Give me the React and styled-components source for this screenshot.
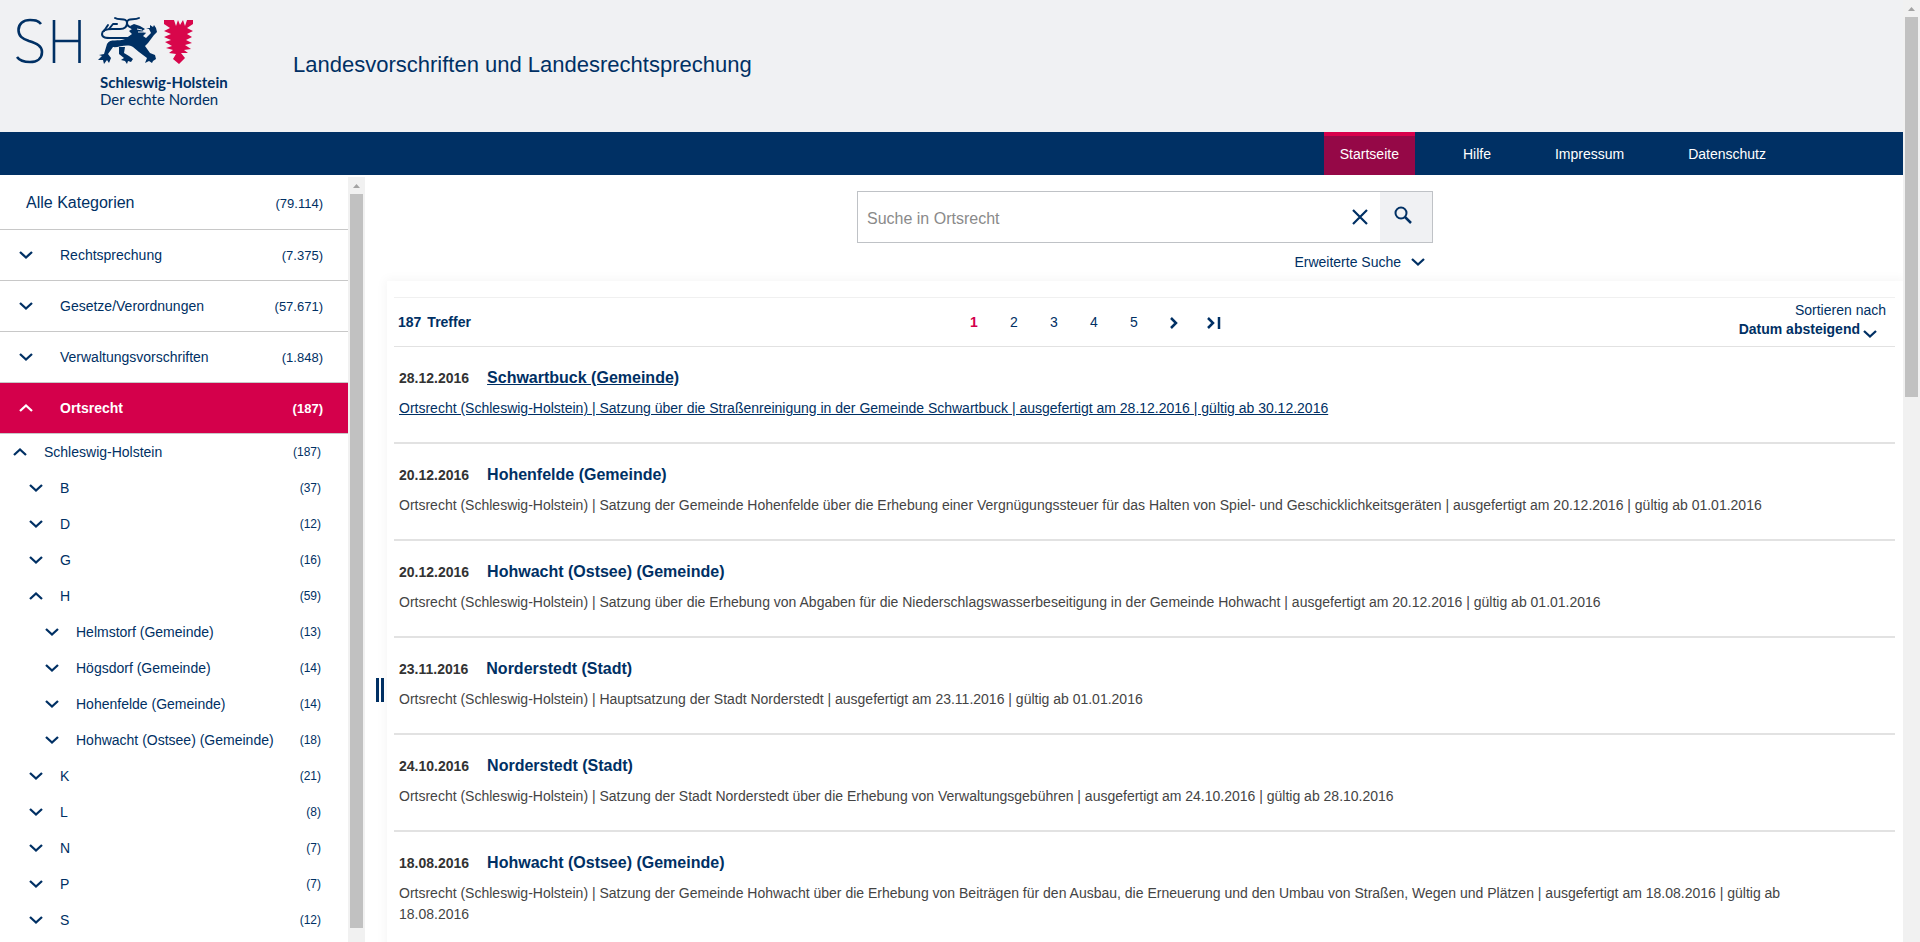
import React from 'react'
import styled, { createGlobalStyle, css } from 'styled-components'

const navItems = ['Startseite', 'Hilfe', 'Impressum', 'Datenschutz']

const categories = [
  { label: 'Rechtsprechung', count: '7.375' },
  { label: 'Gesetze/Verordnungen', count: '57.671' },
  { label: 'Verwaltungsvorschriften', count: '1.848' },
  { label: 'Ortsrecht', count: '187', active: true },
]

const tree = [
  { label: 'Schleswig-Holstein', count: 187, level: 0, open: true },
  { label: 'B', count: 37, level: 1 },
  { label: 'D', count: 12, level: 1 },
  { label: 'G', count: 16, level: 1 },
  { label: 'H', count: 59, level: 1, open: true },
  { label: 'Helmstorf (Gemeinde)', count: 13, level: 2 },
  { label: 'Högsdorf (Gemeinde)', count: 14, level: 2 },
  { label: 'Hohenfelde (Gemeinde)', count: 14, level: 2 },
  { label: 'Hohwacht (Ostsee) (Gemeinde)', count: 18, level: 2 },
  { label: 'K', count: 21, level: 1 },
  { label: 'L', count: 8, level: 1 },
  { label: 'N', count: 7, level: 1 },
  { label: 'P', count: 7, level: 1 },
  { label: 'S', count: 12, level: 1 },
]

const results = [
  {
    date: '28.12.2016',
    title: 'Schwartbuck (Gemeinde)',
    text: 'Ortsrecht (Schleswig-Holstein) | Satzung über die Straßenreinigung in der Gemeinde Schwartbuck | ausgefertigt am 28.12.2016 | gültig ab 30.12.2016',
    active: true,
  },
  {
    date: '20.12.2016',
    title: 'Hohenfelde (Gemeinde)',
    text: 'Ortsrecht (Schleswig-Holstein) | Satzung der Gemeinde Hohenfelde über die Erhebung einer Vergnügungssteuer für das Halten von Spiel- und Geschicklichkeitsgeräten | ausgefertigt am 20.12.2016 | gültig ab 01.01.2016',
  },
  {
    date: '20.12.2016',
    title: 'Hohwacht (Ostsee) (Gemeinde)',
    text: 'Ortsrecht (Schleswig-Holstein) | Satzung über die Erhebung von Abgaben für die Niederschlagswasserbeseitigung in der Gemeinde Hohwacht | ausgefertigt am 20.12.2016 | gültig ab 01.01.2016',
  },
  {
    date: '23.11.2016',
    title: 'Norderstedt (Stadt)',
    text: 'Ortsrecht (Schleswig-Holstein) | Hauptsatzung der Stadt Norderstedt | ausgefertigt am 23.11.2016 | gültig ab 01.01.2016',
  },
  {
    date: '24.10.2016',
    title: 'Norderstedt (Stadt)',
    text: 'Ortsrecht (Schleswig-Holstein) | Satzung der Stadt Norderstedt über die Erhebung von Verwaltungsgebühren | ausgefertigt am 24.10.2016 | gültig ab 28.10.2016',
  },
  {
    date: '18.08.2016',
    title: 'Hohwacht (Ostsee) (Gemeinde)',
    text: 'Ortsrecht (Schleswig-Holstein) | Satzung der Gemeinde Hohwacht über die Erhebung von Beiträgen für den Ausbau, die Erneuerung und den Umbau von Straßen, Wegen und Plätzen | ausgefertigt am 18.08.2016 | gültig ab 18.08.2016',
  },
]

const Chevron = ({ up }) => (
  <ChevronSvg width="14" height="10" viewBox="0 0 14 10" $up={up} aria-hidden="true">
    <path d="M1 2 L7 7.500 L13 2" />
  </ChevronSvg>
)

const Logo = () => (
  <svg width="250" height="120" viewBox="0 0 250 120" role="img" aria-label="Schleswig-Holstein">
    <g fill="none" stroke="#003064" strokeWidth="2.6">
      <path d="M41 24 C38 20 34 20 30 20 C23 20 18.500 24 18.500 30 C18.500 36 22 38.500 29 41 C37 43.500 42 46 42 52 C42 58.500 37 62 30 62 C24 62 19.500 60.500 17 57" />
      <path d="M54 20 V63 M79.500 20 V63 M54 41 H79.500" />
    </g>
    <g fill="none" stroke="#003064" strokeWidth="2" strokeLinecap="round" strokeLinejoin="round">
      <path d="M115 18 C119 21 127 17 127 23 C127 27 124 29 120 29 H112 C104 29 102 32 102 34 C102 38 106 38 112 38 H128" />
      <path d="M139 18 C134 21 127 17 127 23 C127 26 129 27 132 28 M104 31 L108 25 M109 29 L113 24 L117 24" />
    </g>
    <g fill="#003064">
      <path d="M130 26 L134 24 L140 26 L145 29 L142 31 L146 33 L143 36 L146 38 L151 33 L149 29 L146 28 L150 28 L150 25 L153 27 L154 25 L156 28 L157 32 L154 35 L148 43 L145 46 L150 53 L155 55 L156 59 L153 61 L152 63 L149 61 L145 63 L147 58 L139 52 L133 47 C127 43 118 48 113 47 L108 54 L111 58 L109 63 L107 60 L104 64 L103 60 L98 60 L102 56 L99 55 L104 54 L107 44 C110 38 119 42 125 39 L132 34 L129 31 L132 29 Z" />
      <path d="M119 47 L125 47 L124 53 L129 56 L133 59 L131 62 L128 61 L127 64 L125 61 L121 60 L124 58 L119 54 Z" />
    </g>
    <path d="M137 29 L142 30 M138 32 L145 32" stroke="#f0f1f3" strokeWidth="1" />
    <path
      fill="#d8064b"
      d="M164 20 H174 L176 26 L178 20 L180 25 L183 20 L185 26 L187 20 H193 L193 24 L187 28 L193 31 L187 34 L192 37 L186 40 L192 43 L185 45 L191 49 L184 50 L188 53 L181 53 L185 58 L179 64 L173 59 L176 54 L169 53 L173 50 L166 48 L172 46 L165 42 L171 40 L164 37 L171 34 L164 31 L170 28 L164 24 Z"
    />
    <LogoName x="100" y="88">Schleswig-Holstein</LogoName>
    <LogoClaim x="100" y="105">Der echte Norden</LogoClaim>
  </svg>
)

const ScrollBar = ({ size }) => (
  <ScrollTrack aria-hidden="true">
    <ScrollArrow width="17" height="17" viewBox="0 0 17 17">
      <path d="M5 11 L8.500 7 L12 11 Z" fill="#a3a3a3" />
    </ScrollArrow>
    <ScrollThumb $size={size} />
  </ScrollTrack>
)

const Header = () => (
  <header>
    <Banner>
      <Logo />
      <SiteTitle>Landesvorschriften und Landesrechtsprechung</SiteTitle>
    </Banner>
    <Nav>
      {navItems.map((item, i) => (
        <NavLink key={item} href="#" $active={i === 0}>{item}</NavLink>
      ))}
    </Nav>
  </header>
)

const Sidebar = () => (
  <SidebarLayout>
    <Categories>
      <AllCategories href="#">
        <span>Alle Kategorien</span>
        <Count>(79.114)</Count>
      </AllCategories>
      {categories.map((cat) => (
        <Category key={cat.label} $active={cat.active}>
          <Chevron up={cat.active} />
          <Label>{cat.label}</Label>
          <Count>({cat.count})</Count>
        </Category>
      ))}
      {tree.map((node) => (
        <TreeNode key={node.label} $level={node.level}>
          <Chevron up={node.open} />
          <Label>{node.label}</Label>
          <TreeCount>({node.count})</TreeCount>
        </TreeNode>
      ))}
    </Categories>
    <ScrollBar size="734px" />
  </SidebarLayout>
)

const Search = () => (
  <SearchArea>
    <SearchBox>
      <SearchInput type="text" placeholder="Suche in Ortsrecht" aria-label="Suche in Ortsrecht" />
      <ClearButton aria-label="Eingabe löschen">
        <svg width="16" height="16" viewBox="0 0 16 16">
          <path d="M1 1 L15 15 M15 1 L1 15" stroke="#003064" strokeWidth="2.2" />
        </svg>
      </ClearButton>
      <SearchButton aria-label="Suchen">
        <svg width="18" height="18" viewBox="0 0 18 18" fill="none" stroke="#003064">
          <circle cx="7" cy="7" r="5.500" strokeWidth="2" />
          <path d="M11 11 L17 17" strokeWidth="2.500" />
        </svg>
      </SearchButton>
    </SearchBox>
    <AdvancedSearch>
      Erweiterte Suche
      <Chevron />
    </AdvancedSearch>
  </SearchArea>
)

const Results = () => (
  <Panel>
    <Toolbar>
      <HitCount>
        <span>187</span>
        <span>Treffer</span>
      </HitCount>
      <Pages aria-label="Seiten">
        {[1, 2, 3, 4, 5].map((n) => (
          <PageButton key={n} $active={n === 1}>{n}</PageButton>
        ))}
        <PageButton aria-label="Nächste Seite">
          <PageIcon width="14" height="14" viewBox="0 0 14 14">
            <path d="M4 2 L9 7 L4 12" />
          </PageIcon>
        </PageButton>
        <PageButton aria-label="Letzte Seite">
          <PageIcon width="14" height="14" viewBox="0 0 14 14">
            <path d="M1 2 L6 7 L1 12 M12 1 V13" />
          </PageIcon>
        </PageButton>
      </Pages>
      <Sorting>
        <span>Sortieren nach</span>
        <SortButton>
          Datum absteigend
          <Chevron />
        </SortButton>
      </Sorting>
    </Toolbar>
    {results.map((hit) => (
      <Hit key={hit.date + hit.title}>
        <HitHead>
          <HitDate>{hit.date}</HitDate>
          <HitTitle href="#" $active={hit.active}>{hit.title}</HitTitle>
        </HitHead>
        <HitText href="#" $active={hit.active}>{hit.text}</HitText>
      </Hit>
    ))}
  </Panel>
)

const App = () => (
  <>
    <GlobalStyle />
    <Layout>
      <Page>
        <Header />
        <Body>
          <Sidebar />
          <Splitter><SplitHandle /></Splitter>
          <Main>
            <Search />
            <Results />
          </Main>
        </Body>
      </Page>
      <ScrollBar size="380px" />
    </Layout>
  </>
)

export default App

const GlobalStyle = createGlobalStyle`
  * {
    box-sizing: border-box;
  }

  body {
    margin: 0;
    background: #fff;
    color: #003064;
    font-family: "Liberation Sans", Arial, sans-serif;
    font-size: 14px;
  }

  button {
    padding: 0;
    border: 0;
    background: none;
    color: inherit;
    font: inherit;
    cursor: pointer;
  }

  a {
    color: inherit;
    text-decoration: none;
  }
`

const Layout = styled.div`
  display: flex;
  height: 100vh;
  overflow: hidden;
`

const Page = styled.div`
  display: flex;
  flex: 1;
  flex-direction: column;
  min-width: 0;
`

const Banner = styled.div`
  display: flex;
  gap: 43px;
  height: 132px;
  background: #f0f1f3;
`

const LogoName = styled.text`
  fill: #003064;
  font: bold 15px Lato, sans-serif;
`

const LogoClaim = styled.text`
  fill: #003064;
  font: 15px Lato, sans-serif;
`

const SiteTitle = styled.h1`
  margin: 0;
  font-size: 22px;
  font-weight: normal;
  line-height: 130px;
`

const Nav = styled.nav`
  display: flex;
  gap: 32px;
  justify-content: flex-end;
  height: 43px;
  padding-right: 121px;
  background: #003064;
`

const NavLink = styled.a`
  padding: 0 16px;
  border-top: 4px solid transparent;
  color: #fff;
  line-height: 37px;
  ${(props) => props.$active && css`
    border-color: #d8004b;
    background: #950847;
  `}
`

const Body = styled.div`
  display: flex;
  flex: 1;
  min-height: 0;
`

const SidebarLayout = styled.aside`
  display: flex;
  width: 365px;
  padding-top: 2px;
`

const Categories = styled.div`
  flex: 1;
  min-width: 0;
`

const AllCategories = styled.a`
  display: flex;
  align-items: center;
  justify-content: space-between;
  height: 53px;
  padding: 0 25px 0 26px;
  border-bottom: 1px solid #c8c8c8;
  font-size: 16px;
`

const Category = styled.button`
  display: flex;
  align-items: center;
  width: 100%;
  height: 51px;
  padding: 0 25px 0 19px;
  border-bottom: 1px solid #c8c8c8;
  text-align: left;
  gap: 27px;
  ${(props) => props.$active && css`
    background: #d4004b;
    color: #fff;
    font-weight: bold;
  `}
`

const TreeNode = styled.button`
  display: flex;
  align-items: center;
  width: 100%;
  height: 36px;
  padding: 0 27px 0 ${(props) => [13, 29, 45][props.$level]}px;
  text-align: left;
  gap: 17px;
`

const Label = styled.span`
  flex: 1;
`

const Count = styled.span`
  font-size: 13px;
`

const TreeCount = styled.span`
  font-size: 12px;
`

const ChevronSvg = styled.svg`
  flex: none;
  fill: none;
  stroke: currentColor;
  stroke-width: 2.3;
  transform: ${(props) => (props.$up ? 'rotate(180deg)' : 'none')};
`

const ScrollTrack = styled.div`
  display: flex;
  flex: none;
  flex-direction: column;
  align-items: center;
  width: 17px;
  background: #f1f1f1;
`

const ScrollArrow = styled.svg`
  flex: none;
`

const ScrollThumb = styled.div`
  width: 13px;
  height: ${(props) => props.$size};
  background: #c1c1c1;
`

const Splitter = styled.div`
  display: flex;
  align-items: center;
  justify-content: flex-end;
  width: 22px;
  padding: 262px 3px 0 0;
`

const SplitHandle = styled.div`
  width: 8px;
  height: 24px;
  border: solid #003064;
  border-width: 0 3px;
`

const Main = styled.main`
  flex: 1;
  min-width: 0;
`

const SearchArea = styled.div`
  display: flex;
  flex-direction: column;
  align-items: flex-end;
  width: 576px;
  height: 106px;
  margin: 0 auto;
  padding-top: 16px;
`

const SearchBox = styled.div`
  display: flex;
  width: 100%;
  height: 52px;
  border: 1px solid #bfc2c6;
`

const SearchInput = styled.input`
  flex: 1;
  min-width: 0;
  padding: 4px 9px 0;
  border: 0;
  background: none;
  font: 16px "Liberation Sans", Arial, sans-serif;

  &::placeholder {
    color: #8a8a8a;
  }
`

const ClearButton = styled.button`
  width: 40px;
  line-height: 0;
`

const SearchButton = styled.button`
  width: 52px;
  padding: 0 7px 4px 0;
  background: #f0f1f3;
  line-height: 0;
`

const AdvancedSearch = styled.button`
  display: flex;
  align-items: center;
  gap: 10px;
  padding: 11px 8px 0 0;
`

const Panel = styled.section`
  padding: 16px 8px 0 7px;
  box-shadow: 0 0 10px 2px rgba(0, 0, 0, 0.04);
`

const Toolbar = styled.div`
  display: grid;
  grid-template-columns: 1fr auto 1fr;
  align-items: center;
  height: 50px;
  padding: 0 9px 0 4px;
  border-top: 1px solid #f0f0f0;
  border-bottom: 1px solid #e2e2e2;
`

const HitCount = styled.strong`
  display: flex;
  gap: 6px;
`

const Pages = styled.nav`
  display: flex;
  margin-right: 96px;
`

const PageButton = styled.button`
  width: 40px;
  ${(props) => props.$active && css`
    color: #d4004b;
    font-weight: bold;
  `}
`

const PageIcon = styled.svg`
  fill: none;
  stroke: currentColor;
  stroke-width: 2.5;
  vertical-align: middle;
`

const Sorting = styled.div`
  display: flex;
  flex-direction: column;
  align-items: flex-end;
  padding-bottom: 5px;
  line-height: 19px;
`

const SortButton = styled.button`
  display: flex;
  align-items: flex-end;
  gap: 3px;
  padding-right: 9px;
  font-weight: bold;
`

const Hit = styled.article`
  padding: 20px 65px 23px 5px;
  border-bottom: 2px solid #e2e2e2;
`

const HitHead = styled.div`
  display: flex;
  align-items: baseline;
  gap: 18px;
  margin-bottom: 9px;
`

const HitDate = styled.time`
  color: #333;
  font-weight: bold;
`

const HitTitle = styled.a`
  font-size: 16px;
  font-weight: bold;
  line-height: 22px;
  text-decoration: ${(props) => (props.$active ? 'underline' : 'none')};
`

const HitText = styled.a`
  display: block;
  color: ${(props) => (props.$active ? '#003064' : '#444')};
  line-height: 21px;
  text-decoration: ${(props) => (props.$active ? 'underline' : 'none')};
`
